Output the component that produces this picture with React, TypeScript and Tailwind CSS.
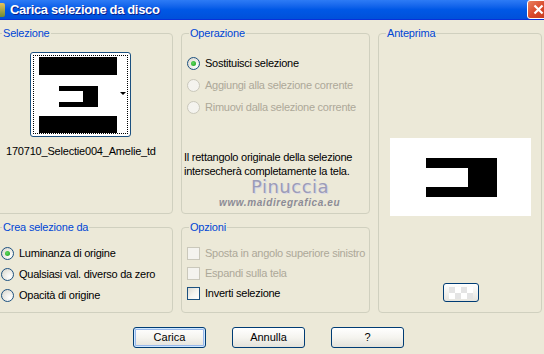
import React from "react";

const font = { fontFamily: '"Liberation Sans", Arial, sans-serif' };

const Group = ({
  label,
  className,
  children,
}: {
  label: string;
  className?: string;
  children?: React.ReactNode;
}) => (
  <div className={`relative rounded-[4px] border border-[#D0D0BF] ${className ?? ""}`}>
    <span className="absolute -top-[8px] left-[7px] bg-[#ECE9D8] px-[1px] text-[11px] leading-[14px] tracking-[-0.2px] text-[#0046D5]">
      {label}
    </span>
    {children}
  </div>
);

const Radio = ({ checked, disabled, label }: { checked?: boolean; disabled?: boolean; label: string }) => (
  <div className="flex h-[13px] items-center gap-[5px]">
    <span
      className={`flex h-[13px] w-[13px] shrink-0 items-center justify-center rounded-full border ${
        disabled
          ? "border-[#CAC8BB] bg-[#F4F3EE]"
          : "border-[#1C5180] bg-[radial-gradient(circle_at_70%_70%,#FFFFFF_0%,#F0EFEA_40%,#D6D3C9_100%)]"
      }`}
    >
      {checked && <span className="h-[5px] w-[5px] rounded-full bg-[radial-gradient(circle_at_40%_40%,#5FDB5F,#1A9A1A)]" />}
    </span>
    <span className={`whitespace-nowrap text-[11px] leading-[13px] tracking-[-0.25px] ${disabled ? "text-[#ACA899]" : "text-black"}`}>
      {label}
    </span>
  </div>
);

const Check = ({ disabled, label }: { disabled?: boolean; label: string }) => (
  <div className="flex h-[13px] items-center gap-[5px]">
    <span
      className={`h-[13px] w-[13px] shrink-0 border ${
        disabled
          ? "border-[#CAC8BB] bg-[#F4F3EE]"
          : "border-[#1C5180] bg-gradient-to-br from-[#DCDBD4] via-[#F4F3EE] to-white"
      }`}
    />
    <span className={`whitespace-nowrap text-[11px] leading-[13px] tracking-[-0.25px] ${disabled ? "text-[#ACA899]" : "text-black"}`}>
      {label}
    </span>
  </div>
);

const XpButton = ({ label, def }: { label: string; def?: boolean }) => (
  <button
    className={`h-[21px] w-[73px] rounded-[3px] border border-[#003C74] bg-gradient-to-b from-white via-[#F5F4EF] to-[#E3E2DA] text-[11px] text-black ${
      def ? "shadow-[inset_0_0_0_1px_#CEE7FF,inset_0_0_0_2px_#98B8EA]" : ""
    }`}
  >
    {label}
  </button>
);

export default function App() {
  return (
    <div className="relative h-[354px] w-[544px] overflow-hidden bg-[#ECE9D8]" style={font}>
      {/* title bar */}
      <div className="flex h-[20px] items-center border-b border-[#0831D9] bg-gradient-to-b from-[#2D7BF5] via-[#0058E6] to-[#0050DA]">
        <div className="h-[14px] w-[5px] rounded-r-[2px] bg-gradient-to-b from-[#E8C25A] to-[#6B8A3A]" />
        <span className="ml-[5px] text-[13px] font-bold tracking-[-0.35px] text-white [text-shadow:1px_1px_0_#0A1E8C]">
          Carica selezione da disco
        </span>
        <div className="ml-auto mr-[-6px] flex h-[19px] w-[23px] items-center justify-center rounded-[3px] border border-white bg-gradient-to-br from-[#E8805F] via-[#D9482B] to-[#C23A1C]">
          <svg width="11" height="11" viewBox="0 0 11 11">
            <path d="M1.5 1.5 L9.5 9.5 M9.5 1.5 L1.5 9.5" stroke="white" strokeWidth="2.2" />
          </svg>
        </div>
      </div>

      {/* panels */}
      <div className="ml-[-6px] mt-[13px] grid grid-cols-[179px_189px_164px] grid-rows-[181px_86px] gap-x-[8px] gap-y-[13px]">
        <Group label="Selezione">
          <div className="ml-[35px] mt-[18px] flex h-[85px] w-[101px] rounded-[3px] border border-[#1C5180] bg-white p-[2px]">
            <div className="relative flex flex-1 border border-dotted border-black">
              <div className="ml-[5px] flex w-[78px] flex-col">
                <div className="mt-[1px] h-[19px] bg-black" />
                <div className="ml-[20px] mt-[11px] flex h-[22px] w-[39px] items-center bg-black">
                  <div className="h-[11px] w-[24px] bg-white" />
                </div>
                <div className="mt-[9px] h-[18px] bg-black" />
              </div>
              <svg className="absolute right-[1px] top-[36px]" width="6" height="4" viewBox="0 0 6 4">
                <path d="M0 0 H6 L3 3 Z" fill="black" />
              </svg>
            </div>
          </div>
          <div className="ml-[11px] mt-[8px] whitespace-nowrap text-[11px] leading-[13px] tracking-[-0.2px] text-black">
            170710_Selectie004_Amelie_td
          </div>
        </Group>

        <Group label="Operazione" className="relative">
          <div className="ml-[5px] mt-[23px] flex flex-col gap-[9px]">
            <Radio checked label="Sostituisci selezione" />
            <Radio disabled label="Aggiungi alla selezione corrente" />
            <Radio disabled label="Rimuovi dalla selezione corrente" />
          </div>
          <p className="ml-[2px] mt-[36px] whitespace-nowrap text-[11px] leading-[14px] tracking-[-0.25px] text-black">
            Il rettangolo originale della selezione
            <br />
            intersecherà completamente la tela.
          </p>
          <div
            className="pointer-events-none absolute left-[69px] top-[144px] text-[18px] leading-[17px] tracking-[0.5px] text-[#9C9CB8] [text-shadow:1px_1px_0_#D8D8E6]"
            style={{ fontFamily: '"DejaVu Sans", sans-serif' }}
          >
            Pinuccia
          </div>
          <div className="pointer-events-none absolute left-[37px] top-[163px] text-[10px] font-bold italic leading-[11px] tracking-[0.6px] text-[#8C8C96]">
            www.maidiregrafica.eu
          </div>
        </Group>

        <Group label="Anteprima" className="row-span-2 flex flex-col items-center">
          <div className="mt-[104px] flex h-[78px] w-[141px] items-start bg-white">
            <div className="ml-[36px] mt-[20px] flex h-[39px] w-[71px] items-center bg-black">
              <div className="h-[19px] w-[42px] bg-white" />
            </div>
          </div>
          <div className="ml-[2px] mt-[67px] flex h-[19px] w-[36px] items-center justify-center rounded-[3px] border border-[#003C74] bg-gradient-to-b from-white to-[#E6E5DE]">
            <svg width="24" height="12" viewBox="0 0 24 12">
              <rect width="24" height="12" fill="#FFFFFF" />
              <rect x="0" y="0" width="6" height="6" fill="#E4E4E4" />
              <rect x="12" y="0" width="6" height="6" fill="#E4E4E4" />
              <rect x="6" y="6" width="6" height="6" fill="#E4E4E4" />
              <rect x="18" y="6" width="6" height="6" fill="#E4E4E4" />
            </svg>
          </div>
        </Group>

        <Group label="Crea selezione da">
          <div className="ml-[6px] mt-[19px] flex flex-col gap-[8px]">
            <Radio checked label="Luminanza di origine" />
            <Radio label="Qualsiasi val. diverso da zero" />
            <Radio label="Opacità di origine" />
          </div>
        </Group>

        <Group label="Opzioni">
          <div className="ml-[5px] mt-[19px] flex flex-col gap-[7px]">
            <Check disabled label="Sposta in angolo superiore sinistro" />
            <Check disabled label="Espandi sulla tela" />
            <Check label="Inverti selezione" />
          </div>
        </Group>
      </div>

      {/* buttons */}
      <div className="ml-[133px] mt-[14px] flex gap-[26px]">
        <XpButton label="Carica" def />
        <XpButton label="Annulla" />
        <XpButton label="?" />
      </div>
    </div>
  );
}
